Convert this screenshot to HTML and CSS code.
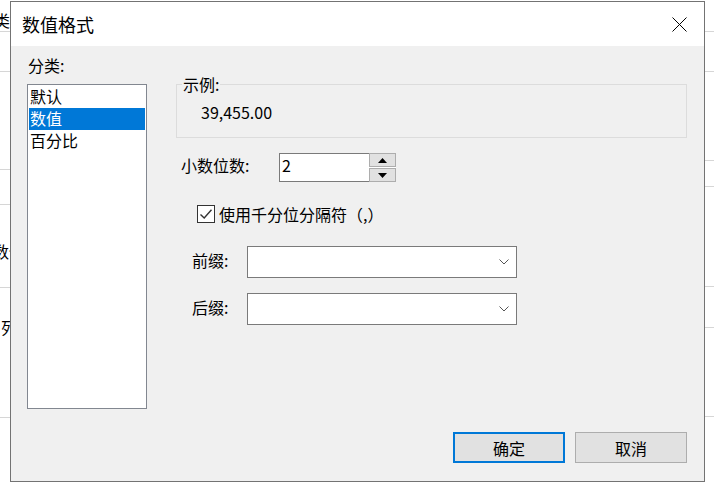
FILE: index.html
```html
<!DOCTYPE html>
<html lang="zh-CN">
<head>
<meta charset="utf-8">
<title>数值格式</title>
<link rel="stylesheet" href="styles.css">
</head>
<body>
<div class="screen">
  <div class="backdrop">
    <div class="bcol bleft">
      <div class="brow h32"><span class="btext t-cat">类</span></div>
      <div class="brow h40"></div>
      <div class="brow h98"></div>
      <div class="brow h35"></div>
      <div class="brow h83"><span class="btext t-num">数值</span></div>
      <div class="brow h130"><span class="btext t-col">列</span></div>
    </div>
    <div class="bcol bright">
      <div class="brow h32"></div>
      <div class="brow h40"></div>
      <div class="brow h89"></div>
      <div class="brow h26"></div>
      <div class="brow h100"></div>
      <div class="brow h41"></div>
      <div class="brow h89"></div>
    </div>
  </div>

  <div class="dialog">
    <div class="titlebar">
      <span class="title">数值格式</span>
      <svg class="close" width="15" height="15" viewBox="0 0 15 15">
        <path d="M0.5 0.5 L14.5 14.5 M14.5 0.5 L0.5 14.5" stroke="#000" stroke-width="1" fill="none"/>
      </svg>
    </div>
    <div class="content">
      <div class="main">
        <div class="leftcol">
          <div class="lbl">分类:</div>
          <ul class="listbox">
            <li>默认</li>
            <li class="sel">数值</li>
            <li>百分比</li>
          </ul>
        </div>
        <div class="rightcol">
          <fieldset class="group">
            <legend>示例:</legend>
            <div class="sample">39,455.00</div>
          </fieldset>

          <div class="spinrow">
            <span class="rlabel">小数位数:</span>
            <div class="num">2</div>
            <div class="spinner">
              <div class="sbtn">
                <svg width="9" height="5" viewBox="0 0 9 5"><polygon points="0,5 9,5 4.5,0" fill="#000"/></svg>
              </div>
              <div class="sbtn">
                <svg width="9" height="5" viewBox="0 0 9 5"><polygon points="0,0 9,0 4.5,5" fill="#000"/></svg>
              </div>
            </div>
          </div>

          <div class="checkrow">
            <span class="cbox">
              <svg width="16" height="16" viewBox="0 0 16 16"><path d="M2.5 8.5 L6.2 12 L13.5 3.8" stroke="#333" stroke-width="1.4" fill="none"/></svg>
            </span>
            <span class="clabel">使用千分位分隔符（,）</span>
          </div>

          <div class="comborow first">
            <span class="clbl">前缀:</span>
            <div class="combo">
              <svg width="10" height="6" viewBox="0 0 10 6"><path d="M0.5 0.5 L5 5 L9.5 0.5" stroke="#555" stroke-width="1" fill="none"/></svg>
            </div>
          </div>
          <div class="comborow">
            <span class="clbl">后缀:</span>
            <div class="combo">
              <svg width="10" height="6" viewBox="0 0 10 6"><path d="M0.5 0.5 L5 5 L9.5 0.5" stroke="#555" stroke-width="1" fill="none"/></svg>
            </div>
          </div>
        </div>
      </div>
      <div class="footer">
        <button class="btn default">确定</button>
        <button class="btn">取消</button>
      </div>
    </div>
  </div>
</div>
</body>
</html>
```
FILE: styles.css
```css
html, body {
  margin: 0;
  padding: 0;
  background: #ffffff;
}

body {
  font-family: "Noto Sans CJK SC", "Microsoft YaHei", sans-serif;
  font-size: 16px;
  color: #000;
}

.screen {
  position: relative;
  width: 714px;
  height: 492px;
  overflow: hidden;
  background: #fff;
}

/* background window behind the dialog */
.backdrop {
  display: flex;
  justify-content: space-between;
  height: 492px;
}

.bcol {
  width: 12px;
  display: flex;
  flex-direction: column;
  overflow: hidden;
}

.brow {
  box-sizing: border-box;
  border-bottom: 1px solid #d6d6d6;
  white-space: nowrap;
  line-height: 20px;
}

.h26 { height: 26px; }
.h32 { height: 32px; }
.h35 { height: 35px; }
.h40 { height: 40px; }
.h41 { height: 41px; }
.h83 { height: 83px; }
.h89 { height: 89px; }
.h98 { height: 98px; }
.h100 { height: 100px; }
.h130 { height: 130px; }

.btext {
  display: block;
}

.t-cat {
  margin-left: -6px;
  padding-top: 10px;
}

.t-num {
  margin-left: -7px;
  padding-top: 36px;
}

.t-col {
  margin-left: 1px;
  padding-top: 29px;
}

/* dialog window */
.dialog {
  position: absolute;
  left: 10px;
  top: 1px;
  width: 695px;
  height: 481px;
  box-sizing: border-box;
  border: 1px solid #737373;
  background: #f0f0f0;
  display: flex;
  flex-direction: column;
}

.titlebar {
  height: 44px;
  background: #fff;
  display: flex;
  align-items: center;
  justify-content: space-between;
  padding-left: 11px;
  flex-shrink: 0;
}

.title {
  font-size: 18px;
  line-height: 24px;
}

.close {
  margin-right: 17px;
  display: block;
}

.content {
  flex: 1;
  display: flex;
  flex-direction: column;
  padding: 9px 17px 18px 16px;
}

.main {
  flex: 1;
  display: flex;
  gap: 29px;
}

.leftcol {
  width: 120px;
  flex-shrink: 0;
}

.lbl {
  line-height: 20px;
  margin-left: 1px;
}

.listbox {
  list-style: none;
  margin: 9px 0 0 0;
  padding: 1px;
  height: 325px;
  box-sizing: border-box;
  border: 1px solid #828790;
  background: #fff;
}

.listbox li {
  height: 22px;
  box-sizing: border-box;
  line-height: 20px;
  padding: 0 0 2px 1px;
}

.listbox li.sel {
  background: #0078d7;
  color: #fff;
}

.rightcol {
  flex: 1;
  padding-top: 19px;
  display: flex;
  flex-direction: column;
}

.group {
  margin: 0;
  padding: 0 0 15px 5px;
  border: 1px solid #dcdcdc;
  min-width: 0;
}

.group legend {
  padding: 0 1px;
  line-height: 20px;
}

.sample {
  margin: 8px 0 0 19px;
  line-height: 20px;
}

.spinrow {
  margin-top: 15px;
  display: flex;
  height: 29px;
}

.rlabel {
  width: 98px;
  margin-left: 5px;
  line-height: 20px;
  padding-top: 2px;
}

.num {
  width: 90px;
  height: 29px;
  box-sizing: border-box;
  border: 1px solid #7a7a7a;
  border-right: none;
  background: #fff;
  padding: 1px 0 0 2px;
  line-height: 21px;
}

.spinner {
  width: 27px;
  display: flex;
  flex-direction: column;
  gap: 1px;
  background: #fff;
}

.sbtn {
  height: 14px;
  box-sizing: border-box;
  border: 1px solid #adadad;
  background: #e1e1e1;
  display: flex;
  align-items: center;
  justify-content: center;
}

.sbtn svg {
  display: block;
}

.checkrow {
  margin-top: 22px;
  height: 20px;
  display: flex;
  align-items: center;
  margin-left: 21px;
}

.cbox {
  width: 18px;
  height: 18px;
  box-sizing: border-box;
  border: 1px solid #333;
  background: #fff;
  display: flex;
  align-items: center;
  justify-content: center;
}

.cbox svg {
  display: block;
}

.clabel {
  margin-left: 4px;
  line-height: 20px;
}

.comborow {
  display: flex;
  align-items: flex-start;
  margin-top: 15px;
  margin-left: 16px;
}

.comborow.first {
  margin-top: 22px;
}

.clbl {
  width: 55px;
  line-height: 20px;
  padding-top: 4px;
}

.combo {
  width: 270px;
  height: 32px;
  box-sizing: border-box;
  border: 1px solid #7a7a7a;
  background: #fff;
  display: flex;
  align-items: center;
  justify-content: flex-end;
  padding-right: 7px;
}

.combo svg {
  display: block;
}

.footer {
  display: flex;
  justify-content: flex-end;
  gap: 10px;
  flex-shrink: 0;
}

.btn {
  width: 112px;
  height: 31px;
  box-sizing: border-box;
  border: 1px solid #adadad;
  background: #e1e1e1;
  font-family: inherit;
  font-size: 16px;
  color: #000;
  padding: 0;
  line-height: 20px;
}

.btn.default {
  border: 2px solid #0078d7;
}
```
